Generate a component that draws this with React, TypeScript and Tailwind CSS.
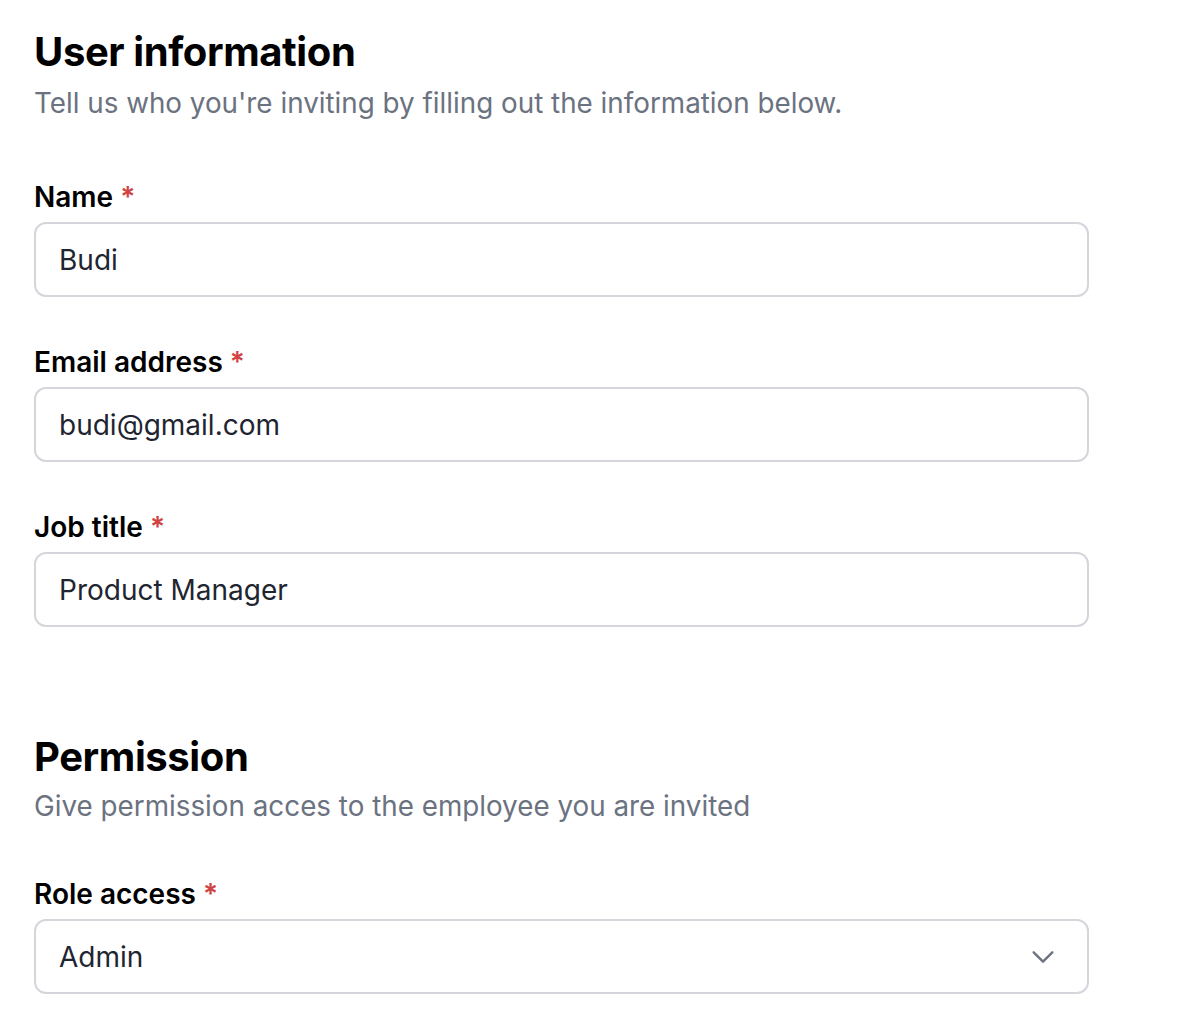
import React from 'react';

const Label: React.FC<{ text: string }> = ({ text }) => (
  <div className="text-[28px] leading-[36px] font-semibold text-black">
    {text} <span className="text-[#d14343]">*</span>
  </div>
);

const Field: React.FC<{ label: string; value: string }> = ({ label, value }) => (
  <div className="flex flex-col gap-[7px]">
    <Label text={label} />
    <div className="h-[75px] w-[1055px] rounded-[12px] border-2 border-[#d4d6db] bg-white px-[23px] flex items-center text-[28px] text-[#1f2530]">
      {value}
    </div>
  </div>
);

export default function App() {
  return (
    <div className="min-h-screen bg-white pl-[34px] pt-[26px]" style={{ fontFamily: 'Inter, "Noto Sans", sans-serif' }}>
      {/* User information */}
      <div className="flex flex-col">
        <h1 className="text-[40px] leading-[52px] font-bold text-black tracking-[-0.4px]">User information</h1>
        <p className="mt-[5px] text-[27.8px] leading-[40px] text-[#6b7280]">Tell us who you're inviting by filling out the information below.</p>
      </div>
      <div className="mt-[56px] flex flex-col gap-[47px]">
        <Field label="Name" value="Budi" />
        <Field label="Email address" value="budi@gmail.com" />
        <Field label="Job title" value="Product Manager" />
      </div>

      {/* Permission */}
      <div className="mt-[104px] flex flex-col">
        <h2 className="text-[40px] leading-[52px] font-bold text-black tracking-[-0.4px]">Permission</h2>
        <p className="mt-[3px] text-[27.8px] leading-[40px] text-[#6b7280]">Give permission acces to the employee you are invited</p>
      </div>
      <div className="mt-[50px] flex flex-col gap-[7px]">
        <Label text="Role access" />
        <div className="h-[75px] w-[1055px] rounded-[12px] border-2 border-[#d4d6db] bg-white pl-[23px] pr-[30px] flex items-center justify-between text-[28px] text-[#1f2530]">
          <span>Admin</span>
          <svg width="28" height="28" viewBox="0 0 24 24" fill="none" stroke="#6b7280" strokeWidth="2" strokeLinecap="round" strokeLinejoin="round">
            <path d="M4 8l8 8 8-8" />
          </svg>
        </div>
      </div>
    </div>
  );
}
